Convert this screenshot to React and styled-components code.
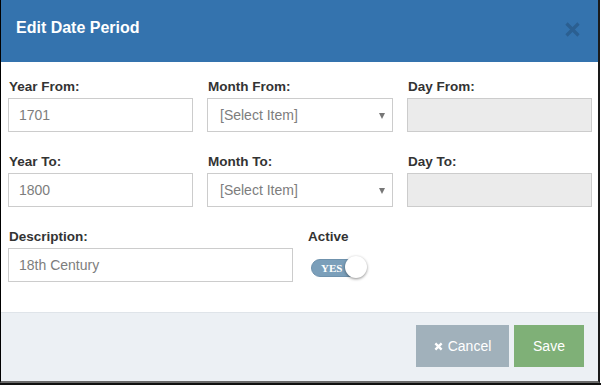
import React from "react";
import styled, { createGlobalStyle } from "styled-components";

const Global = createGlobalStyle`
  html, body { margin: 0; padding: 0; background: #fff; }
  body { font-family: "Liberation Sans", Arial, sans-serif; }
  * { box-sizing: border-box; }
`;

const Frame = styled.div`
  width: 601px;
  height: 385px;
  background: #fff;
  border-bottom: 2px solid #111;
  display: flex;
`;

const Modal = styled.div`
  width: 600px;
  height: 383px;
  border-left: 1px solid #000;
  border-right: 2px solid #1a1a1a;
  border-bottom: 2px solid #6a6a6a;
  display: flex;
  flex-direction: column;
  background: #fff;
`;

const Header = styled.div`
  height: 62px;
  background: #3473ae;
  display: flex;
  justify-content: space-between;
  align-items: flex-start;
  padding: 18px 15px 0 15px;
`;

const Title = styled.h4`
  margin: 0;
  color: #fff;
  font-size: 16px;
  line-height: 20px;
  font-weight: bold;
`;

const Close = styled.button`
  border: 0;
  background: none;
  padding: 0;
  margin-top: 4px;
  margin-right: 2px;
  width: 17px;
  height: 15px;
  display: flex;
  cursor: pointer;
`;

const Body = styled.div`
  flex: 1;
  padding: 16px 6px 0 7px;
  display: flex;
  flex-direction: column;
  gap: 21px;
`;

const Row = styled.div`
  display: grid;
  grid-template-columns: ${(p) => p.$cols};
  column-gap: 14px;
`;

const Field = styled.div`
  display: flex;
  flex-direction: column;
`;

const Label = styled.label`
  font-size: 13.5px;
  font-weight: bold;
  color: #333;
  line-height: 18px;
  height: 20px;
  padding-left: 1px;
`;

const Input = styled.div`
  height: 34px;
  border: 1px solid #ccc;
  background: ${(p) => (p.$disabled ? "#ebebeb" : "#fff")};
  color: #7d7d7d;
  font-size: 14px;
  display: flex;
  align-items: center;
  padding-left: ${(p) => p.$pad || 10}px;
  position: relative;
`;

const Caret = styled.span`
  position: absolute;
  right: 7px;
  top: 14px;
  width: 0;
  height: 0;
  border-left: 3.5px solid transparent;
  border-right: 3.5px solid transparent;
  border-top: 6px solid #777;
`;

const ToggleWrap = styled.div`
  margin-top: 8px;
  margin-left: 4px;
  width: 56px;
  height: 22px;
  position: relative;
`;

const Track = styled.div`
  position: absolute;
  left: 0;
  top: 3px;
  width: 48px;
  height: 18px;
  border-radius: 9px;
  background: #7b9fba;
  border: 1px solid #6f92ad;
  color: #fff;
  font-family: "Liberation Serif", "Times New Roman", serif;
  font-weight: bold;
  font-size: 11px;
  line-height: 16px;
  padding-left: 9px;
`;

const Knob = styled.div`
  position: absolute;
  left: 34px;
  top: 0;
  width: 22px;
  height: 22px;
  border-radius: 50%;
  background: #fff;
  box-shadow: 0 1px 3px rgba(0, 0, 0, 0.45);
`;

const Footer = styled.div`
  height: 69px;
  background: #ecf0f4;
  border-top: 1px solid #dfe4e9;
  display: flex;
  justify-content: flex-end;
  align-items: flex-start;
  gap: 5px;
  padding: 12px 14px 0 0;
`;

const Button = styled.button`
  height: 42px;
  width: ${(p) => p.$w}px;
  border: 0;
  background: ${(p) => p.$bg};
  color: #fff;
  font-family: "Liberation Sans", Arial, sans-serif;
  font-size: 14px;
  display: flex;
  align-items: center;
  justify-content: center;
  gap: 5px;
  padding: 0;
`;

const XIcon = ({ size, color, stroke }) => (
  <svg width={size} height={size} viewBox="0 0 10 10">
    <path d="M1.5 1.5 L8.5 8.5 M8.5 1.5 L1.5 8.5" stroke={color} strokeWidth={stroke} strokeLinecap="butt" />
  </svg>
);

export default function App() {
  return (
    <>
      <Global />
      <Frame>
        <Modal>
          <Header>
            <Title>Edit Date Period</Title>
            <Close aria-label="close">
              <svg width="17" height="15" viewBox="0 0 17 15">
                <path d="M2.5 1.5 L14.5 13.5 M14.5 1.5 L2.5 13.5" stroke="#2b5f91" strokeWidth="3.2" />
              </svg>
            </Close>
          </Header>
          <Body>
            <Row $cols="185px 186px 185px">
              <Field>
                <Label>Year From:</Label>
                <Input>1701</Input>
              </Field>
              <Field>
                <Label>Month From:</Label>
                <Input $pad={12}>[Select Item]<Caret /></Input>
              </Field>
              <Field>
                <Label>Day From:</Label>
                <Input $disabled />
              </Field>
            </Row>
            <Row $cols="185px 186px 185px">
              <Field>
                <Label>Year To:</Label>
                <Input>1800</Input>
              </Field>
              <Field>
                <Label>Month To:</Label>
                <Input $pad={12}>[Select Item]<Caret /></Input>
              </Field>
              <Field>
                <Label>Day To:</Label>
                <Input $disabled />
              </Field>
            </Row>
            <Row $cols="285px 285px">
              <Field>
                <Label>Description:</Label>
                <Input>18th Century</Input>
              </Field>
              <Field>
                <Label>Active</Label>
                <ToggleWrap>
                  <Track>YES</Track>
                  <Knob />
                </ToggleWrap>
              </Field>
            </Row>
          </Body>
          <Footer>
            <Button $w={93} $bg="#a1b1bb">
              <XIcon size={9} color="#fff" stroke={2.6} />
              Cancel
            </Button>
            <Button $w={70} $bg="#7fb077">Save</Button>
          </Footer>
        </Modal>
      </Frame>
    </>
  );
}
